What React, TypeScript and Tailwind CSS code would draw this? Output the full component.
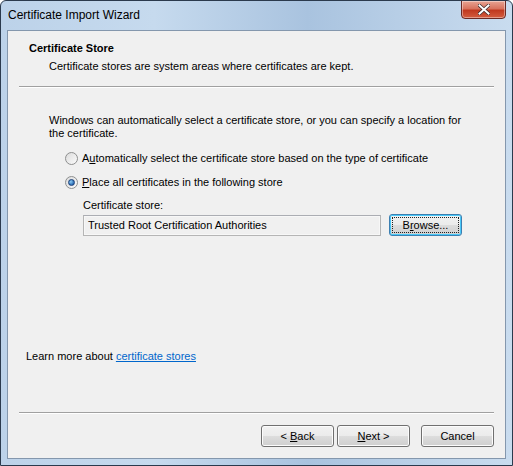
import React from 'react';

const font = { fontFamily: '"Liberation Sans", Arial, sans-serif' };

const Radio: React.FC<{ checked?: boolean }> = ({ checked }) => (
  <span className="flex h-[13px] w-[13px] shrink-0 items-center justify-center rounded-full border border-[#8e8f8f] bg-gradient-to-br from-[#dcdcdc] to-[#fbfbfb]">
    {checked && (
      <span className="h-[7px] w-[7px] rounded-full border border-[#1b3f78] bg-[radial-gradient(circle_at_35%_35%,#8ccbf4,#2a6bb3_70%)]" />
    )}
  </span>
);

const WinButton: React.FC<{ children: React.ReactNode; focused?: boolean; className?: string }> = ({ children, focused, className }) => (
  <button
    className={`relative flex h-[22px] w-[73px] items-center justify-center rounded-[3px] border text-[11px] text-black bg-[linear-gradient(#f2f2f2_0%,#ebebeb_50%,#dddddd_50%,#cfcfcf_100%)] ${
      focused
        ? 'border-[#3c7fb1] shadow-[inset_0_0_0_1px_#48c8f8]'
        : 'border-[#707070] shadow-[inset_0_0_0_1px_#fcfcfc]'
    } ${className ?? ''}`}
  >
    {focused && <span className="absolute inset-[2px] border border-dotted border-[#222]" />}
    <span className="relative">{children}</span>
  </button>
);

export default function App() {
  return (
    <div
      className="relative h-[466px] w-[513px] overflow-hidden rounded-t-[6px] border border-[#2b3a4d] bg-[linear-gradient(90deg,#bcd2e9_0%,#c6daee_30%,#a9c3df_60%,#c9dcef_100%)]"
      style={font}
    >
      {/* title bar */}
      <div className="flex h-[29px] items-center pl-[7px] text-[12px] text-black">
        <span className="mt-[-2px]">Certificate Import Wizard</span>
        <div className="ml-auto mr-[6px] mt-[-12px] flex h-[19px] w-[45px] items-center justify-center rounded-b-[4px] border border-[#6b2a24] bg-[linear-gradient(#e8a493_0%,#d8735e_45%,#c0391f_55%,#d45d3f_100%)] shadow-[inset_0_0_0_1px_rgba(255,255,255,0.4)]">
          <svg width="12" height="11" viewBox="0 0 12 11">
            <path d="M1.5 1.5 L10.5 9.5 M10.5 1.5 L1.5 9.5" stroke="#3a2a2a" strokeWidth="3.4" strokeLinecap="square" />
            <path d="M1.5 1.5 L10.5 9.5 M10.5 1.5 L1.5 9.5" stroke="#ffffff" strokeWidth="2" strokeLinecap="square" />
          </svg>
        </div>
      </div>

      {/* client area */}
      <div className="mx-[6px] flex h-[429px] flex-col border border-[#8497ad] bg-[#f0f0f0] text-[11px] text-black">
        {/* header */}
        <div className="pl-[21px] pt-[9px]">
          <div className="font-bold">Certificate Store</div>
          <div className="mt-[1px] pl-[20px]">Certificate stores are system areas where certificates are kept.</div>
        </div>
        <div className="mx-[11px] mt-[12px] h-[2px] border-t border-[#a0a0a0] border-b border-b-white" />

        {/* body */}
        <div className="pl-[41px] pr-[30px] pt-[26px] leading-[13px]">
          <p>Windows can automatically select a certificate store, or you can specify a location for the certificate.</p>
          <div className="mt-[12px] flex flex-col gap-[11px] pl-[16px]">
            <label className="flex items-center gap-[4px]">
              <Radio />
              <span>
                A<u>u</u>tomatically select the certificate store based on the type of certificate
              </span>
            </label>
            <label className="flex items-center gap-[4px]">
              <Radio checked />
              <span>
                <u>P</u>lace all certificates in the following store
              </span>
            </label>
          </div>
          <div className="mt-[10px] pl-[34px]">
            <div>Certificate store:</div>
            <div className="mt-[2px] flex items-center gap-[8px]">
              <div className="flex h-[21px] w-[298px] items-center border border-[#b5b5b5] border-t-[#abadb3] bg-[#f0f0f0] pl-[4px] shadow-[inset_0_0_0_1px_#f7f7f7]">
                Trusted Root Certification Authorities
              </div>
              <WinButton focused>
                B<u>r</u>owse...
              </WinButton>
            </div>
          </div>
        </div>

        <div className="mt-auto pl-[18px]">
          Learn more about <a className="text-[#0066cc] underline">certificate stores</a>
        </div>
        <div className="mx-[11px] mt-[48px] h-[2px] border-t border-[#a0a0a0] border-b border-b-white" />
        <div className="flex pb-[11px] pr-[11px] pt-[11px]">
          <div className="ml-auto flex gap-[3px]">
            <WinButton>
              &lt; <u>B</u>ack
            </WinButton>
            <WinButton>
              <u>N</u>ext &gt;
            </WinButton>
          </div>
          <WinButton className="ml-[11px]">Cancel</WinButton>
        </div>
      </div>
    </div>
  );
}
